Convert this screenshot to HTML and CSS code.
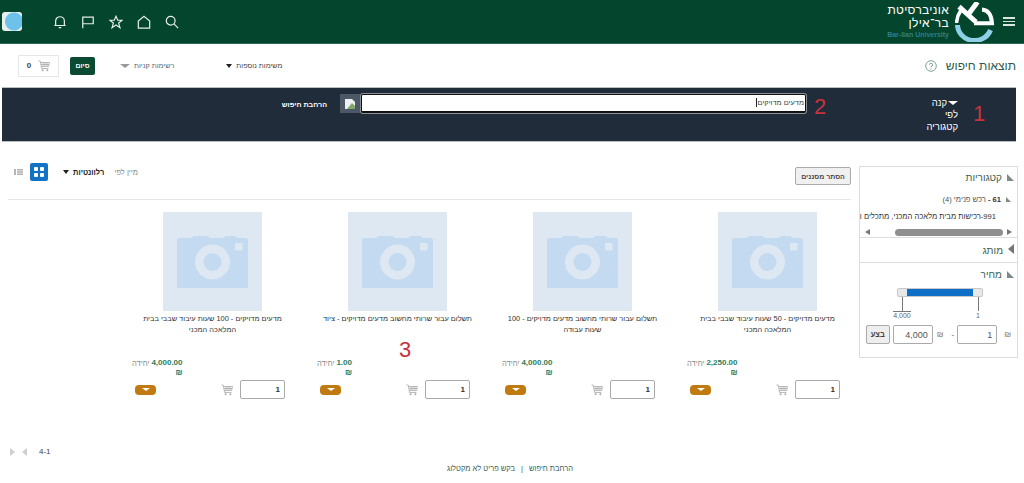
FILE: index.html
```html
<!DOCTYPE html>
<html lang="he" dir="rtl">
<head>
    <meta charset="UTF-8">
    <meta name="viewport" content="width=device-width, initial-scale=1.0">
    <title>תוצאות חיפוש</title>
    <link rel="stylesheet" href="styles.css">
</head>
<body>
    <svg class="defs" width="0" height="0">
        <symbol id="cart" viewBox="0 0 12 12">
            <path d="M0.5 1H2.2L3.6 8.5H10.4M2.6 2.5H11.5L10.6 6.6H3.3M5 2.5V6.6M7 2.5V6.6M9 2.5V6.6M3 4.5H11" fill="none" stroke="#a9a9a9" stroke-width="0.8"/>
            <circle cx="4.6" cy="10.3" r="1" fill="#a9a9a9"/>
            <circle cx="9.4" cy="10.3" r="1" fill="#a9a9a9"/>
        </symbol>
        <symbol id="camera" viewBox="0 0 99 99">
            <rect width="99" height="99" fill="#dde8f3"/>
            <path d="M14 28Q14 26 17 26H28L31 24H44L47 26H60L63 24H72L75 26H82Q85 26 85 28V76H14Z" fill="#c3daf0"/>
            <circle cx="49.5" cy="50" r="17.5" fill="#dde8f3"/>
            <circle cx="49.5" cy="50" r="9" fill="#c3daf0"/>
            <rect x="72" y="31" width="7.5" height="7.5" fill="#dde8f3"/>
        </symbol>
    </svg>

    <header class="topbar">
        <button class="menu-btn" aria-label="תפריט"><span></span><span></span><span></span></button>
        <svg class="logo" viewBox="0 0 40 40" width="40" height="40">
            <path d="M2.5 23A17 16 0 0 0 35.5 28" fill="none" stroke="#8fd0e6" stroke-width="5"/>
            <path d="M4 4.7L21 20" fill="none" stroke="#fff" stroke-width="5"/>
            <path d="M22.5 0L14 11.5" fill="none" stroke="#fff" stroke-width="5"/>
            <path d="M6 8Q2 14 1.5 21" fill="none" stroke="#fff" stroke-width="3.5"/>
            <path d="M27 7.5Q36 8 37 21.3H19" fill="none" stroke="#fff" stroke-width="4"/>
        </svg>
        <div class="logo-text">
            <div class="logo-he">אוניברסיטת</div>
            <div class="logo-he">בר־אילן</div>
            <div class="logo-en" dir="ltr">Bar-Ilan University</div>
        </div>
        <div class="topbar-icons">
            <svg class="top-icon" viewBox="0 0 16 16"><circle cx="6.5" cy="6.5" r="5"/><path d="M10.2 10.2L15 15"/></svg>
            <svg class="top-icon" viewBox="0 0 16 16"><path d="M1.5 15V7L8 1.5L14.5 7V15Z"/></svg>
            <svg class="top-icon" viewBox="0 0 16 16"><path d="M8 1.5L10 6H15L11 9.2L12.5 14.5L8 11.5L3.5 14.5L5 9.2L1 6H6Z"/></svg>
            <svg class="top-icon" viewBox="0 0 16 16"><path d="M2 15V2.5H14V10H2"/></svg>
            <svg class="top-icon" viewBox="0 0 16 16"><path d="M3 12V7A5 5 0 0 1 13 7V12ZM1.5 12H14.5M6.5 14.5H9.5"/></svg>
        </div>
        <div class="avatar"></div>
    </header>

    <div class="subhead">
        <h1>תוצאות חיפוש</h1>
        <svg class="help" viewBox="0 0 12 12"><circle cx="6" cy="6" r="5.3"/><path d="M4.4 4.7A1.6 1.6 0 1 1 6 6.5V7.4M6 8.6V9.6"/></svg>
        <div class="subhead-actions">
            <span class="drop-link">משימות נוספות<i class="tri tri-dark"></i></span>
            <span class="drop-link lists">רשימות קניות<i class="tri tri-gray"></i></span>
            <button class="finish-btn">סיום</button>
            <div class="cart-box"><svg width="12" height="12"><use href="#cart"/></svg><b>0</b></div>
        </div>
    </div>

    <div class="search-band">
        <span class="red-num num-1">1</span>
        <div class="by-category"><div><i class="tri tri-white"></i>קנה</div><div>לפי</div><div>קטגוריה</div></div>
        <div class="search-input"><span>מדעים מדויקים</span></div>
        <span class="red-num num-2">2</span>
        <div class="broken-btn">
            <svg width="12" height="12" viewBox="0 0 12 12"><path d="M1 1H8L11 4V11H1Z" fill="#eef1f4"/><path d="M3 11L8 5L11 8V11Z" fill="#7fa96b"/></svg>
        </div>
        <a class="more-search">הרחבת חיפוש</a>
    </div>

    <div class="page-body">
        <aside class="filters">
            <section class="cat-box">
                <h3><i class="corner"></i>קטגוריות</h3>
                <div class="cat-line"><i class="corner small"></i><b>61 - </b>רכש פנימי (4)</div>
                <div class="cat-clip">991-רכישות מבית מלאכה המכני, מתכלים ו</div>
                <div class="scrollbar"><i class="arrow-r"></i><span class="thumb"></span><i class="arrow-l"></i></div>
            </section>
            <section class="type-box">
                <h3><i class="tri-side"></i>מותג</h3>
            </section>
            <section class="price-box">
                <h3><i class="corner"></i>מחיר</h3>
                <div class="slider"><span class="slider-fill"></span></div>
                <div class="slider-marks">
                    <div class="mark">
                        <span class="tick"></span>
                        <span>1</span>
                    </div>
                    <div class="mark mark-max">
                        <span class="tick"></span>
                        <span>4,000</span>
                    </div>
                </div>
                <div class="price-form">
                    <span class="nis">₪</span>
                    <input class="num-input first" value="1" dir="ltr">
                    <span class="dash">-</span>
                    <span class="nis">₪</span>
                    <input class="num-input" value="4,000" dir="ltr">
                    <button class="apply-btn">בצע</button>
                </div>
            </section>
        </aside>

        <main class="results">
            <div class="toolbar">
                <button class="hide-filters">הסתר מסננים</button>
                <div class="sort">
                    <span class="sort-label">מיין לפי</span>
                    <b>רלוונטיות</b>
                    <i class="tri tri-dark"></i>
                    <span class="view-btn">
                        <svg width="10" height="10" viewBox="0 0 10 10" fill="#fff"><rect width="4" height="4" rx="1"/><rect x="6" width="4" height="4" rx="1"/><rect y="6" width="4" height="4" rx="1"/><rect x="6" y="6" width="4" height="4" rx="1"/></svg>
                    </span>
                    <svg class="list-icon" width="9" height="6" viewBox="0 0 9 6" fill="#b5b5b5"><rect width="2" height="6"/><rect x="3" width="6" height="1.6"/><rect x="3" y="2.2" width="6" height="1.6"/><rect x="3" y="4.4" width="6" height="1.6"/></svg>
                </div>
            </div>

            <div class="grid">
                <article class="card">
                    <svg class="thumb-img" width="99" height="99"><use href="#camera"/></svg>
                    <div class="card-title">מדעים מדויקים - 50 שעות עיבוד שבבי בבית המלאכה המכני</div>
                    <div class="price-row"><div class="price"><div dir="ltr">2,250.00</div><div>₪</div></div><span class="unit">יחידה</span></div>
                    <div class="buy-row">
                        <input class="qty" value="1" dir="ltr">
                        <svg width="12" height="12"><use href="#cart"/></svg>
                        <button class="more-btn"><i class="tri tri-white"></i></button>
                    </div>
                </article>
                <article class="card">
                    <svg class="thumb-img" width="99" height="99"><use href="#camera"/></svg>
                    <div class="card-title">תשלום עבור שרותי מחשוב מדעים מדויקים - 100 שעות עבודה</div>
                    <div class="price-row"><div class="price"><div dir="ltr">4,000.00</div><div>₪</div></div><span class="unit">יחידה</span></div>
                    <div class="buy-row">
                        <input class="qty" value="1" dir="ltr">
                        <svg width="12" height="12"><use href="#cart"/></svg>
                        <button class="more-btn"><i class="tri tri-white"></i></button>
                    </div>
                </article>
                <article class="card">
                    <svg class="thumb-img" width="99" height="99"><use href="#camera"/></svg>
                    <div class="card-title">תשלום עבור שרותי מחשוב מדעים מדויקים - ציוד</div>
                    <span class="red-num num-3">3</span>
                    <div class="price-row"><div class="price"><div dir="ltr">1.00</div><div>₪</div></div><span class="unit">יחידה</span></div>
                    <div class="buy-row">
                        <input class="qty" value="1" dir="ltr">
                        <svg width="12" height="12"><use href="#cart"/></svg>
                        <button class="more-btn"><i class="tri tri-white"></i></button>
                    </div>
                </article>
                <article class="card">
                    <svg class="thumb-img" width="99" height="99"><use href="#camera"/></svg>
                    <div class="card-title">מדעים מדויקים - 100 שעות עיבוד שבבי בבית המלאכה המכני</div>
                    <div class="price-row"><div class="price"><div dir="ltr">4,000.00</div><div>₪</div></div><span class="unit">יחידה</span></div>
                    <div class="buy-row">
                        <input class="qty" value="1" dir="ltr">
                        <svg width="12" height="12"><use href="#cart"/></svg>
                        <button class="more-btn"><i class="tri tri-white"></i></button>
                    </div>
                </article>
            </div>
        </main>
    </div>

    <div class="pager" dir="ltr">
        <i class="pg-next"></i>
        <i class="pg-prev"></i>
        <span>4-1</span>
    </div>

    <footer class="foot-links">
        <a>הרחבת חיפוש</a><span class="sep">|</span><a>בקש פריט לא מקטלוג</a>
    </footer>
</body>
</html>
```

FILE: styles.css
```css
html, body {
    margin: 0;
    height: 483px;
    overflow: hidden;
}

body {
    font-family: "Liberation Sans", Arial, sans-serif;
    font-size: 8px;
    color: #444;
    background-color: #fff;
}

.defs {
    position: absolute;
}

/* top bar */
.topbar {
    display: flex;
    align-items: center;
    height: 43px;
    background-color: #03452d;
    border-bottom: 1px solid #2d6a54;
    padding-right: 9px;
    padding-left: 2px;
}

.menu-btn {
    display: flex;
    flex-direction: column;
    gap: 2px;
    width: 12px;
    padding: 0;
    margin-left: 8px;
    background: none;
    border: none;
}

.menu-btn span {
    display: block;
    height: 1.5px;
    background-color: #d9e6e0;
}

.logo {
    margin-left: 6px;
}

.logo-text {
    width: 62px;
    color: #fff;
}

.logo-he {
    font-size: 12px;
    line-height: 13px;
    letter-spacing: 0.3px;
    white-space: nowrap;
}

.logo-en {
    font-size: 7px;
    line-height: 9px;
    color: #2d7f86;
    font-weight: bold;
    text-align: right;
    white-space: nowrap;
}

.topbar-icons {
    display: flex;
    gap: 14px;
    margin-right: auto;
    margin-left: 31px;
}

.top-icon {
    width: 14px;
    height: 14px;
    fill: none;
    stroke: #e4efe9;
    stroke-width: 1.4;
}

.avatar {
    width: 20px;
    height: 19px;
    border-radius: 3px;
    background: radial-gradient(circle at 60% 50%, #6dc1ea 0 8.5px, #e8f0ee 9.5px);
}

/* title row */
.subhead {
    display: flex;
    align-items: center;
    height: 43px;
    padding: 0 8px 0 18px;
}

.subhead h1 {
    margin: 0 0 0 9px;
    font-size: 12px;
    font-weight: normal;
    color: #2c5a4b;
}

.help {
    width: 12px;
    height: 12px;
    fill: none;
    stroke: #5f8a78;
    stroke-width: 0.8;
}

.subhead-actions {
    display: flex;
    align-items: center;
    margin-right: auto;
}

.drop-link {
    font-size: 7.2px;
    color: #444;
}

.lists {
    margin-right: 52px;
    color: #666;
}

.finish-btn {
    margin-right: 25px;
    width: 25px;
    height: 18px;
    padding: 0;
    border: none;
    border-radius: 2px;
    background-color: #0b4a33;
    color: #fff;
    font: bold 7px "Liberation Sans", Arial, sans-serif;
}

.cart-box {
    display: flex;
    align-items: center;
    justify-content: center;
    gap: 7px;
    box-sizing: border-box;
    width: 41px;
    height: 22px;
    margin-right: 11px;
    border: 1px solid #e6e6e6;
    font-size: 8px;
}

.tri {
    display: inline-block;
    width: 0;
    height: 0;
    vertical-align: middle;
    margin-right: 4px;
    border-style: solid;
    border-width: 4px 3.5px 0;
    border-color: #222 transparent transparent;
}

.tri-gray {
    border-width: 4px 5px 0;
    border-top-color: #999;
}

.tri-white {
    border-top-color: #fff;
}

/* search band */
.search-band {
    position: relative;
    display: flex;
    box-sizing: border-box;
    height: 55px;
    margin: 0 8px 0 2px;
    padding-top: 6px;
    background-color: #202c39;
    border-top: 1px solid #b9bec3;
    border-bottom: 1px solid #b9bec3;
}

.by-category {
    width: 33px;
    margin: 3px 58px 0 0;
    font-size: 9.5px;
    line-height: 12px;
    color: #fff;
    text-align: right;
}

.by-category .tri {
    margin: 0 0 0 1px;
    border-width: 4px 5px 0;
}

.search-input {
    box-sizing: border-box;
    width: 445px;
    height: 19px;
    margin-right: 119px;
    padding: 0 1px;
    background-color: #fff;
    border: 1px solid #111;
    border-bottom: 2px solid #111;
    border-radius: 2px;
    box-shadow: 0 0 0 1px #8a9199;
    font-size: 7.4px;
    line-height: 16px;
}

.search-input span {
    border-left: 1px solid #222;
    padding-left: 1px;
}

.broken-btn {
    display: flex;
    align-items: center;
    justify-content: center;
    width: 20px;
    height: 19px;
    margin-right: 1px;
    background-color: #4d5866;
}

.more-search {
    margin: 6px 13px 0 0;
    color: #fff;
    font-size: 7.2px;
    font-weight: bold;
}

/* numbers written over the screenshot */
.red-num {
    position: absolute;
    color: #c8323c;
    font-size: 22px;
    line-height: 24px;
}

.num-1 {
    left: 971px;
    top: 14px;
}

.num-2 {
    left: 812px;
    top: 7px;
}

.num-3 {
    left: 84px;
    top: 126px;
}

/* body */
.page-body {
    display: flex;
    align-items: flex-start;
    gap: 8px;
    padding: 24px 6px 0 0;
}

.filters {
    box-sizing: border-box;
    width: 159px;
    border: 1px solid #ddd;
    color: #555;
}

.filters h3 {
    margin: 0;
    font-size: 10px;
    font-weight: normal;
    color: #3c5f55;
}

.corner {
    display: inline-block;
    width: 0;
    height: 0;
    margin: 0 0 0 5px;
    border-style: solid;
    border-width: 0 7px 7px 0;
    border-color: transparent transparent #7c8a8a transparent;
}

.corner.small {
    border-width: 0 5px 5px 0;
    margin-left: 5px;
}

.tri-side {
    display: inline-block;
    width: 0;
    height: 0;
    margin-left: 5px;
    border-style: solid;
    border-width: 5px 6px 5px 0;
    border-color: transparent #777 transparent transparent;
}

.cat-box {
    box-sizing: border-box;
    height: 71px;
    padding-top: 5px;
    border-bottom: 1px solid #ddd;
    overflow: hidden;
}

.cat-box h3 {
    padding-right: 3px;
}

.cat-line {
    margin: 12px 5px 0 0;
    padding-right: 1px;
    font-size: 7.6px;
}

.cat-line b {
    color: #333;
}

.cat-clip {
    margin-top: 8px;
    padding-right: 21px;
    white-space: nowrap;
    font-size: 7.6px;
    color: #333;
}

.scrollbar {
    display: flex;
    align-items: center;
    margin: 7px 5px 0 5px;
    height: 8px;
}

.thumb {
    width: 108px;
    height: 7px;
    margin-right: 4px;
    border-radius: 4px;
    background-color: #8f8f8f;
}

.arrow-r, .arrow-l {
    width: 0;
    height: 0;
    border-style: solid;
    border-width: 3.5px 0;
    border-color: transparent #777;
}

.arrow-r {
    border-left-width: 5px;
}

.arrow-l {
    border-right-width: 5px;
    margin-right: auto;
}

.type-box {
    box-sizing: border-box;
    height: 25px;
    padding: 6px 3px 0 0;
    border-bottom: 1px solid #ddd;
}

.price-box {
    box-sizing: border-box;
    height: 94px;
    padding-top: 6px;
}

.price-box h3 {
    padding-right: 3px;
}

.slider {
    box-sizing: border-box;
    width: 86px;
    height: 9px;
    margin: 8px 34px 0 0;
    padding: 0 9px;
    background-color: #e6e8ea;
    border: 1px solid #c8c8c8;
    border-radius: 2px;
}

.slider-fill {
    display: block;
    height: 100%;
    background-color: #0f6fc6;
}

.slider-marks {
    display: flex;
    justify-content: space-between;
    width: 100px;
    margin-right: 27px;
}

.mark {
    display: flex;
    flex-direction: column;
    align-items: center;
    width: 24px;
    font-size: 7px;
    color: #666;
}

.tick {
    width: 1px;
    height: 14px;
    background-color: #777;
    margin-bottom: 1px;
}

.mark-max span:last-child {
    border-top: 1px solid #777;
    margin-top: -1px;
}

.price-form {
    display: flex;
    align-items: center;
    margin-top: 6px;
    padding-right: 6px;
    font-size: 8px;
}

.num-input {
    box-sizing: border-box;
    width: 40px;
    height: 19px;
    margin-right: 4px;
    padding: 0 4px;
    border: 1px solid #aaa;
    border-radius: 2px;
    text-align: right;
    font: 9px "Liberation Sans", Arial, sans-serif;
    color: #555;
}

.num-input.first {
    margin-right: 7px;
}

.dash {
    margin-right: 3px;
}

.nis {
    color: #777;
}

.price-form .dash + .nis {
    margin-right: 8px;
}

.apply-btn {
    width: 24px;
    height: 19px;
    margin-right: 3px;
    padding: 0;
    background-color: #eee;
    border: 1px solid #aaa;
    border-radius: 2px;
    font: bold 7.5px "Liberation Sans", Arial, sans-serif;
    color: #444;
}

/* results */
.results {
    width: 843px;
    position: relative;
}

.toolbar {
    display: flex;
    justify-content: space-between;
    align-items: flex-start;
    height: 33px;
    border-bottom: 1px solid #e6e6e6;
}

.hide-filters {
    width: 56px;
    height: 18px;
    margin-top: 1px;
    padding: 0;
    background-color: #f0f0f0;
    border: 1px solid #aaa;
    border-radius: 2px;
    font: bold 7px "Liberation Sans", Arial, sans-serif;
    color: #444;
}

.sort {
    display: flex;
    align-items: center;
    margin: -3px 0 0 6px;
    font-size: 7.5px;
    color: #888;
}

.sort b {
    margin-right: 10px;
    color: #222;
}

.sort .tri {
    margin-right: 4px;
}

.view-btn {
    display: flex;
    align-items: center;
    justify-content: center;
    width: 18px;
    height: 18px;
    margin-right: 15px;
    background-color: #1273c4;
    border-radius: 2px;
}

.list-icon {
    margin-right: 7px;
}

.grid {
    display: grid;
    grid-template-columns: repeat(4, 155px);
    gap: 30px;
    padding: 12px 11px 0 0;
}

.card {
    position: relative;
    width: 155px;
}

.thumb-img {
    display: block;
    margin-right: 23px;
}

.card-title {
    width: 151px;
    height: 44px;
    margin: 3px -3px 0 0;
    font-size: 7.4px;
    line-height: 10.5px;
    color: #333;
    text-align: center;
}

.price-row {
    display: flex;
    justify-content: flex-end;
    align-items: flex-start;
    height: 22px;
    margin-left: 2px;
}

.price {
    font-size: 8px;
    line-height: 10px;
    font-weight: bold;
    color: #2e7d5b;
}

.unit {
    margin: 1px 2px 0 0;
    font-size: 7.5px;
    color: #888;
}

.buy-row {
    display: flex;
    align-items: center;
    gap: 7px;
}

.qty {
    box-sizing: border-box;
    width: 45px;
    height: 19px;
    padding: 0 4px;
    border: 1px solid #aaa;
    border-radius: 2px;
    text-align: right;
    font: bold 8px "Liberation Sans", Arial, sans-serif;
    color: #333;
}

.more-btn {
    display: flex;
    align-items: center;
    justify-content: center;
    width: 21px;
    height: 10px;
    margin-right: auto;
    margin-left: 5px;
    padding: 0;
    background-color: #c07a10;
    border: none;
    border-radius: 4px;
}

.more-btn .tri {
    margin: 0;
    border-width: 3.5px 4.5px 0;
}

/* pager and footer */
.pager {
    display: flex;
    align-items: center;
    gap: 7px;
    margin-top: 48px;
    padding-left: 10px;
    font-size: 8px;
    color: #444;
}

.pg-next, .pg-prev {
    width: 0;
    height: 0;
    border-style: solid;
    border-width: 4px 0;
    border-color: transparent #cfcfcf;
}

.pg-next {
    border-left-width: 5px;
}

.pg-prev {
    border-right-width: 5px;
}

.pager span {
    margin-left: 5px;
}

.foot-links {
    margin-top: 8px;
    padding-right: 4px;
    text-align: center;
    font-size: 7.5px;
    color: #3c5f55;
}

.sep {
    margin: 0 6px;
}
```
